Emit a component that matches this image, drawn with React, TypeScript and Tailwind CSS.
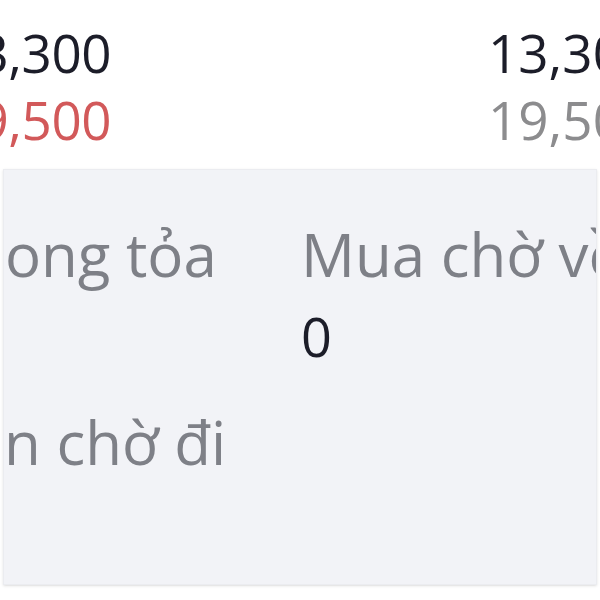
const rows = [
  { left: "13,300", right: "13,300", leftColor: "text-[#1c1d29]", rightColor: "text-[#1c1d29]" },
  { left: "19,500", right: "19,500", leftColor: "text-[#d2595a]", rightColor: "text-[#8c8c8e]" },
];

const stats = [
  { label: "Phong tỏa", value: "0" },
  { label: "Mua chờ về", value: "0" },
  { label: "Bán chờ đi", value: "" },
];

const App = () => {
  return (
    <div className="w-[600px] h-[600px] overflow-hidden bg-white font-['Open_Sans',sans-serif]">
      <section className="h-[169px] pt-[19px]">
        {rows.map((row, index) => (
          <div key={index} className="flex text-[53px] leading-[67px] whitespace-nowrap">
            <div className={`w-[111px] shrink-0 flex justify-end tracking-[-0.5px] ${row.leftColor}`}>{row.left}</div>
            <div className={`ml-[377px] ${row.rightColor}`}>{row.right}</div>
          </div>
        ))}
      </section>
      <section className="ml-[3px] w-[594px] h-[416px] bg-[#f2f3f7] border border-[#ebecf0] shadow-sm overflow-hidden">
        <div className="ml-[-72px] pt-[43px] grid grid-cols-[369px_1fr] gap-y-[25px] whitespace-nowrap">
          {stats.map((item, index) => (
            <div key={index}>
              <div className="text-[60px] leading-[83px] text-[#7e8087]">{item.label}</div>
              <div className="text-[54px] leading-[80px] text-[#1c1d29] h-[80px]">{item.value}</div>
            </div>
          ))}
        </div>
      </section>
    </div>
  );
};

export default App;
